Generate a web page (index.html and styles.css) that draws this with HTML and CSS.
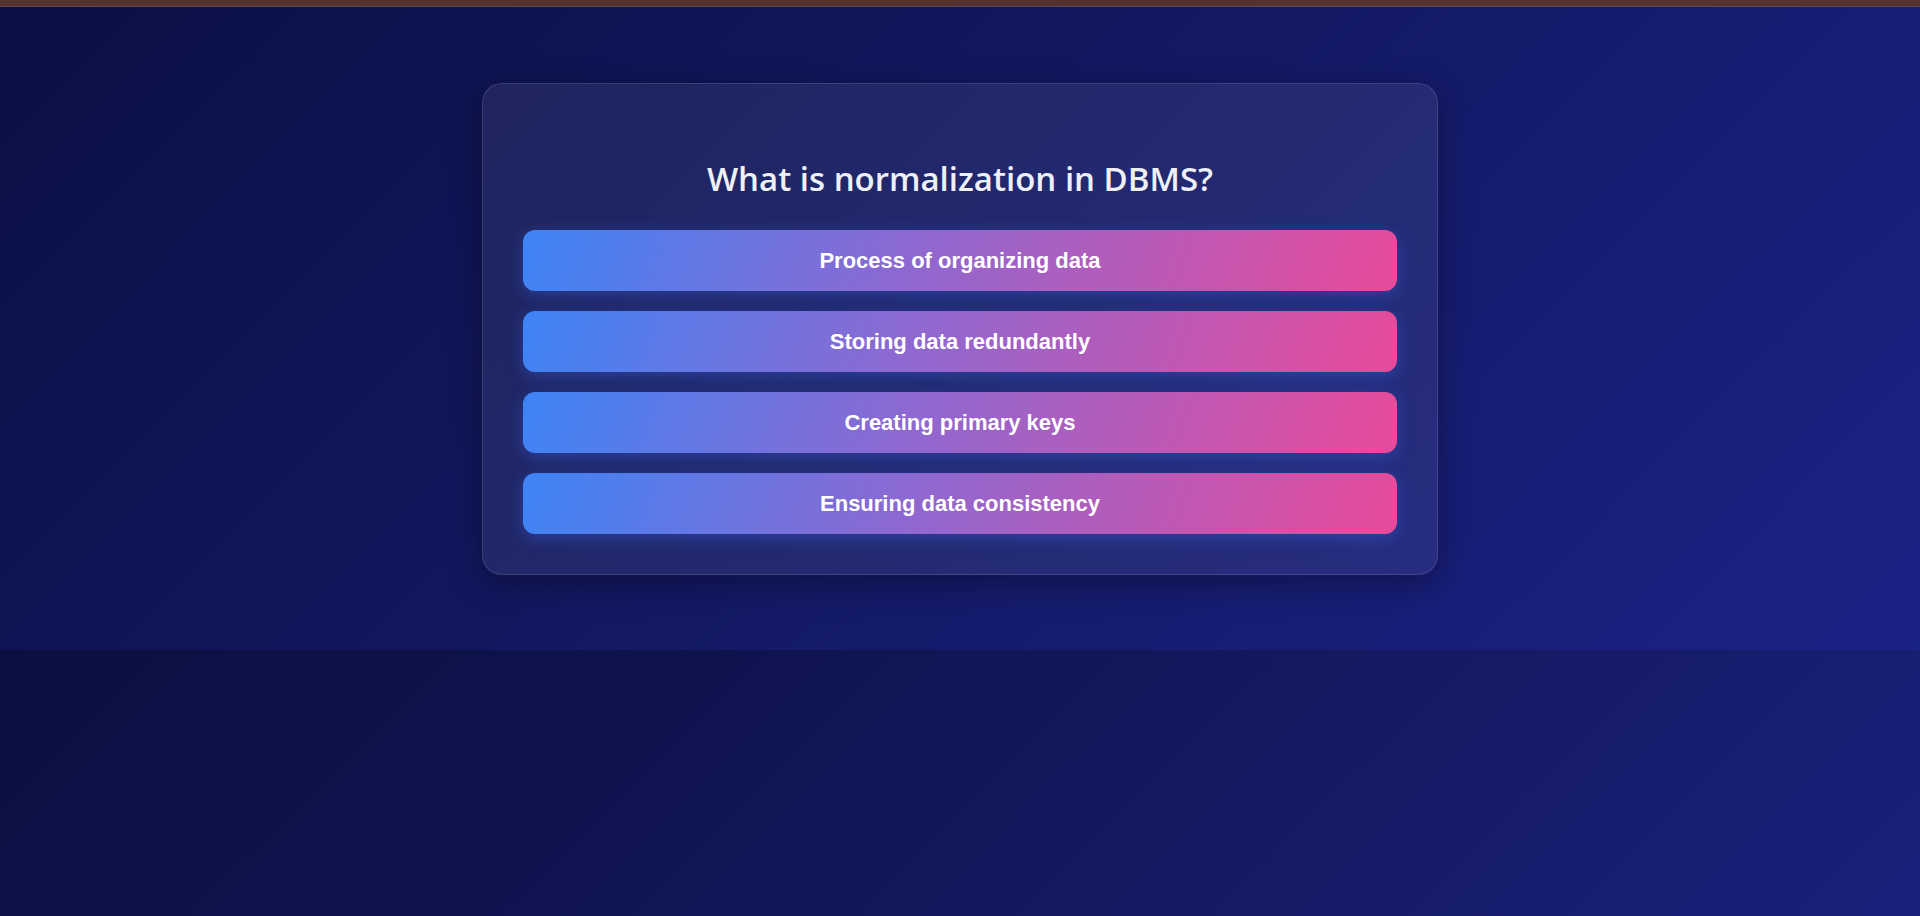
FILE: index.html
```html
<!DOCTYPE html>
<html lang="en">
<head>
<meta charset="utf-8">
<title>Quiz</title>
<link rel="stylesheet" href="styles.css">
</head>
<body>
  <div class="topbar"></div>
  <section class="stage">
    <div class="card">
      <h2 class="question">What is normalization in DBMS?</h2>
      <div class="options">
        <button class="option">Process of organizing data</button>
        <button class="option">Storing data redundantly</button>
        <button class="option">Creating primary keys</button>
        <button class="option">Ensuring data consistency</button>
      </div>
    </div>
  </section>
</body>
</html>
```

FILE: styles.css
```css
* { box-sizing: border-box; }

html, body {
  margin: 0;
  padding: 0;
}

body {
  min-height: 100vh;
  background: linear-gradient(135deg, #080b32 0%, #0f1450 50%, #1a207a 100%);
  font-family: "Liberation Sans", Arial, sans-serif;
}

.topbar {
  height: 7px;
  background: #533230;
  border-bottom: 1px solid #5d4c4e;
}

.stage {
  height: 643px;
  padding-top: 76px;
  background: linear-gradient(135deg, #0a1043 0%, #1b2285 100%);
  display: flex;
  justify-content: center;
  align-items: flex-start;
}

.card {
  width: 956px;
  padding: 40px;
  border-radius: 20px;
  background: rgba(255, 255, 255, 0.07);
  border: 1px solid rgba(255, 255, 255, 0.12);
  box-shadow: 0 8px 32px rgba(0, 0, 0, 0.35);
}

.question {
  margin: 34px 0 29px;
  text-align: center;
  color: #eef0f7;
  font-family: "Open Sans", "Noto Sans", sans-serif;
  font-weight: 600;
  font-size: 33px;
  line-height: 1.3;
}

.options {
  display: flex;
  flex-direction: column;
  gap: 20px;
}

.option {
  display: block;
  width: 100%;
  padding: 18px 16px;
  border: none;
  border-radius: 12px;
  background: linear-gradient(110deg, #3d84f5 0%, #8f68d0 45%, #e84a9a 100%);
  color: #ffffff;
  font-family: "Liberation Sans", Arial, sans-serif;
  font-weight: 700;
  font-size: 22px;
  line-height: 25px;
  text-align: center;
  box-shadow: 0 4px 16px rgba(59, 110, 246, 0.35);
  cursor: pointer;
}
```
